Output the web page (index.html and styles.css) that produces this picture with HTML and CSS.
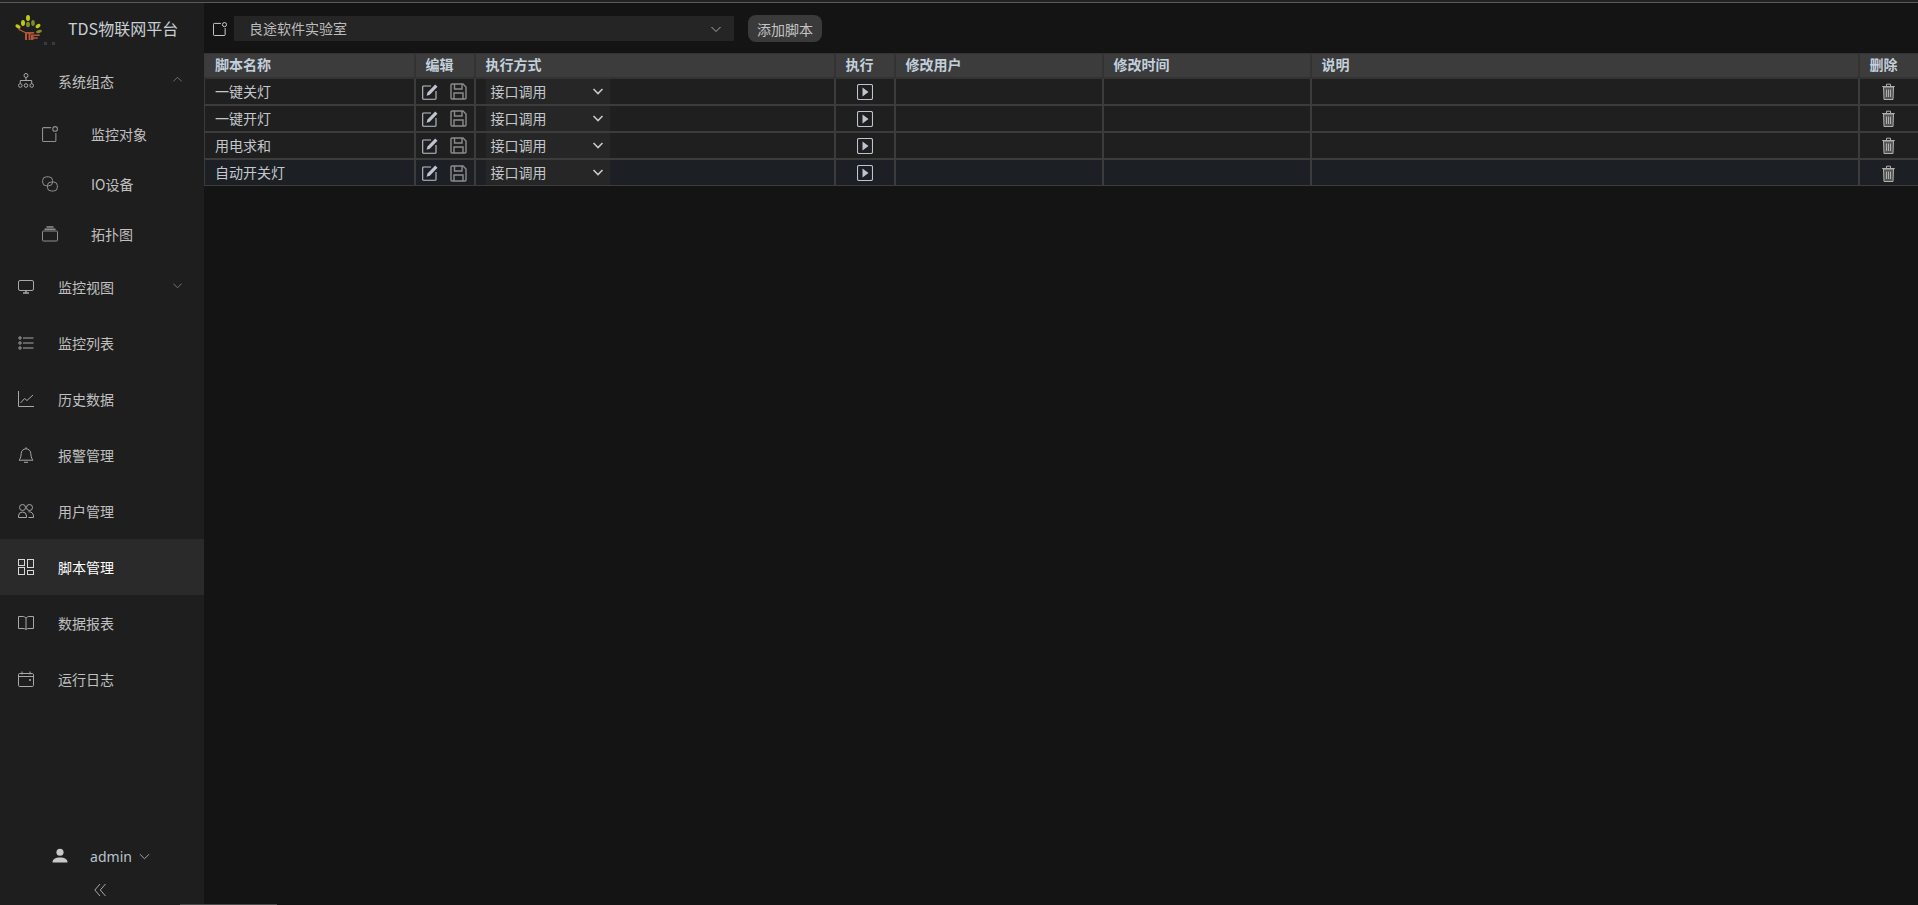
FILE: index.html
```html
<!DOCTYPE html>
<html lang="zh-CN">
<head>
<meta charset="utf-8">
<title>TDS物联网平台</title>
<link rel="stylesheet" href="styles.css">
</head>
<body>
<svg class="defs" width="0" height="0">
  <symbol id="i-obj" viewBox="0 0 15 15"><path d="M8.500 1.500H1.500a1 1 0 0 0-1 1v11a1 1 0 0 0 1 1h10.500a1 1 0 0 0 1-1V6.500"/><circle cx="12.300" cy="2.800" r="2.200"/></symbol>
  <symbol id="i-edit" viewBox="0 0 16 16"><path d="M9 2H1.500a.8.800 0 0 0-.8.800v11.700a.8.800 0 0 0 .8.800h11.700a.8.800 0 0 0 .8-.8V7"/><path class="fill" d="M13.200.5 15.500 2.800 7.800 10.700 4.600 11.700 5.500 8.400Z"/></symbol>
  <symbol id="i-save" viewBox="0 0 17 17"><path d="M1 2a1 1 0 0 1 1-1h11l3 3v11a1 1 0 0 1-1 1H2a1 1 0 0 1-1-1Z"/><path d="M4.500 1v5h7.500V1M4 16v-6h9v6"/></symbol>
  <symbol id="i-play" viewBox="0 0 16 16"><rect x=".5" y=".5" width="15" height="15" rx="1.500"/><path class="fill" d="M5.500 3.500 11.500 8l-6 4.500Z"/></symbol>
  <symbol id="i-trash" viewBox="0 0 13 17"><path class="body" d="M1.500 4h10l-.5 12.500H2Z"/><path d="M.2 3.500h12.600M4.500 3V1.200h4V3M4.500 6.500v7.500M6.500 6.500v7.500M8.500 6.500v7.500"/></symbol>
  <symbol id="i-down" viewBox="0 0 12 12"><path d="M1.500 4 6 8.500 10.500 4"/></symbol>
</svg>

<div class="app">
  <aside class="sidebar">
    <div class="brand">
      <svg class="logo" viewBox="0 0 32 32" width="32" height="32">
        <path class="trunk" d="M5.500 16.500 12.500 20h9l-1 1.800h-3V28h-2v-6.200h-1.500V28h-2v-7l-6.500-3ZM18 22.500h9l-.5 1.500h-6v1.300h4.500l-.5 1.500h-4V28H18Z"/>
        <ellipse class="leaf-y" cx="15" cy="6" rx="2" ry="3"/>
        <ellipse class="leaf-y" cx="10" cy="11" rx="2" ry="3"/>
        <ellipse class="leaf-g" cx="15" cy="12.500" rx="2" ry="2.800"/>
        <ellipse class="leaf-g" cx="20" cy="11" rx="1.800" ry="3"/>
        <ellipse class="leaf-y" cx="5" cy="14.500" rx="2.800" ry="1.800" transform="rotate(30 5 14.500)"/>
        <ellipse class="leaf-y" cx="25" cy="14" rx="2.800" ry="1.800" transform="rotate(-35 25 14)"/>
        <ellipse class="leaf-g" cx="26" cy="19.500" rx="3" ry="1.600" transform="rotate(-15 26 19.500)"/>
      </svg>
      <span class="brand-dots"></span>
      <span class="brand-name">TDS物联网平台</span>
    </div>
    <nav class="menu">
      <div class="item">
        <svg class="ico" viewBox="0 0 16 16"><circle cx="8" cy="2.500" r="2"/><path d="M8 4.500v3M2.300 10.500v-3h11.400v3"/><circle cx="2.300" cy="12.500" r="1.800"/><circle cx="8" cy="12.500" r="1.800"/><circle cx="13.700" cy="12.500" r="1.800"/></svg>
        <span>系统组态</span>
        <svg class="arrow" viewBox="0 0 12 12"><path d="M1.500 8 6 3.500 10.500 8"/></svg>
      </div>
      <div class="sub"><svg class="ico"><use href="#i-obj"/></svg><span>监控对象</span></div>
      <div class="sub"><svg class="ico" viewBox="0 0 16 16"><rect x=".6" y=".8" width="10" height="9" rx="3.800"/><rect x="5.400" y="6" width="10" height="9" rx="3.800"/></svg><span>IO设备</span></div>
      <div class="sub"><svg class="ico" viewBox="0 0 16 16"><rect x=".5" y="5" width="15" height="10" rx=".8"/><path class="wide" d="M2.500 3.300h11M4.500 1h7"/></svg><span>拓扑图</span></div>
      <div class="item">
        <svg class="ico" viewBox="0 0 16 16"><rect x=".5" y="1.500" width="15" height="10" rx="1.500"/><path class="wide" d="M8 11.500v2M5 14h6"/></svg>
        <span>监控视图</span>
        <svg class="arrow" viewBox="0 0 12 12"><path d="M1.500 4 6 8.500 10.500 4"/></svg>
      </div>
      <div class="item"><svg class="ico" viewBox="0 0 16 16"><path d="M5 3h10.500M5 8h10.500M5 13h10.500"/><circle cx="2" cy="3" r="1.200"/><circle cx="2" cy="8" r="1.200"/><circle cx="2" cy="13" r="1.200"/></svg><span>监控列表</span></div>
      <div class="item"><svg class="ico" viewBox="0 0 16 16"><path d="M.5 0v15.500H16M2.500 12l4-4.500 2.500 2L15 4"/></svg><span>历史数据</span></div>
      <div class="item"><svg class="ico" viewBox="0 0 16 16"><path d="M8 1.800a4.800 4.800 0 0 0-4.800 4.800c0 4-1.700 5.900-2.200 6.600h14c-.5-.7-2.200-2.600-2.200-6.600A4.800 4.800 0 0 0 8 1.800ZM8 .3v1.500M6 15.300h4"/></svg><span>报警管理</span></div>
      <div class="item"><svg class="ico" viewBox="0 0 16 16"><circle cx="4.500" cy="4.500" r="3"/><circle cx="11.500" cy="4.500" r="3"/><path d="M.5 14.500V13a4 4 0 0 1 4-4 4 4 0 0 1 4 4v1.500ZM10.500 8.800a4.800 4.800 0 0 1 5 4.200v1.500H10.500"/></svg><span>用户管理</span></div>
      <div class="item active"><svg class="ico" viewBox="0 0 16 16"><rect x=".5" y=".5" width="6" height="6"/><rect x="9.500" y=".5" width="6" height="8"/><rect x=".5" y="8.500" width="6" height="7"/><rect x="9.500" y="11.500" width="6" height="4"/></svg><span>脚本管理</span></div>
      <div class="item"><svg class="ico" viewBox="0 0 16 16"><path d="M8 3v11.500M8 3c-1-1-2-1.500-3-1.500H.5v12H5c1 0 2 .2 3 .8 1-.6 2-.8 3-.8h4.500v-12H11c-1 0-2 .5-3 1.500Z"/></svg><span>数据报表</span></div>
      <div class="item"><svg class="ico" viewBox="0 0 16 16"><rect x=".5" y="2.500" width="15" height="13" rx="1.200"/><path d="M.5 5.500h15M4 .5v3M12 .5v3"/><circle class="fill" cx="12" cy="9" r="1"/></svg><span>运行日志</span></div>
    </nav>
    <div class="side-foot">
      <div class="user">
        <svg class="user-ico" viewBox="0 0 16 16"><circle cx="8" cy="4.500" r="3.800"/><path d="M0 15.500c0-4 3-5.500 8-5.500s8 1.500 8 5.500Z"/></svg>
        <span>admin</span>
        <svg class="user-arrow" viewBox="0 0 12 12"><path d="M1 3.500 6 8.500 11 3.500"/></svg>
      </div>
      <svg class="collapse" viewBox="0 0 12 14"><path d="M6 1 .8 7 6 13M11.500 1 6.300 7l5.200 6"/></svg>
    </div>
  </aside>

  <main class="main">
    <div class="toolbar">
      <svg class="tool-ico"><use href="#i-obj"/></svg>
      <div class="picker"><span>良途软件实验室</span><svg class="picker-arrow"><use href="#i-down"/></svg></div>
      <button class="btn">添加脚本</button>
    </div>
    <table class="grid">
      <colgroup>
        <col class="c-name"><col class="c-edit"><col class="c-mode"><col class="c-run"><col class="c-user"><col class="c-time"><col class="c-desc"><col class="c-del">
      </colgroup>
      <thead>
        <tr><th>脚本名称</th><th>编辑</th><th>执行方式</th><th>执行</th><th>修改用户</th><th>修改时间</th><th>说明</th><th>删除</th></tr>
      </thead>
      <tbody>
        <tr>
          <td>一键关灯</td>
          <td class="mid"><svg class="act"><use href="#i-edit"/></svg><svg class="act save"><use href="#i-save"/></svg></td>
          <td class="mode"><div class="sel"><span>接口调用</span><svg class="sel-arrow"><use href="#i-down"/></svg></div></td>
          <td class="mid"><svg class="act"><use href="#i-play"/></svg></td>
          <td></td><td></td><td></td>
          <td class="mid"><svg class="bin"><use href="#i-trash"/></svg></td>
        </tr>
        <tr>
          <td>一键开灯</td>
          <td class="mid"><svg class="act"><use href="#i-edit"/></svg><svg class="act save"><use href="#i-save"/></svg></td>
          <td class="mode"><div class="sel"><span>接口调用</span><svg class="sel-arrow"><use href="#i-down"/></svg></div></td>
          <td class="mid"><svg class="act"><use href="#i-play"/></svg></td>
          <td></td><td></td><td></td>
          <td class="mid"><svg class="bin"><use href="#i-trash"/></svg></td>
        </tr>
        <tr>
          <td>用电求和</td>
          <td class="mid"><svg class="act"><use href="#i-edit"/></svg><svg class="act save"><use href="#i-save"/></svg></td>
          <td class="mode"><div class="sel"><span>接口调用</span><svg class="sel-arrow"><use href="#i-down"/></svg></div></td>
          <td class="mid"><svg class="act"><use href="#i-play"/></svg></td>
          <td></td><td></td><td></td>
          <td class="mid"><svg class="bin"><use href="#i-trash"/></svg></td>
        </tr>
        <tr class="hover">
          <td>自动开关灯</td>
          <td class="mid"><svg class="act"><use href="#i-edit"/></svg><svg class="act save"><use href="#i-save"/></svg></td>
          <td class="mode"><div class="sel"><span>接口调用</span><svg class="sel-arrow"><use href="#i-down"/></svg></div></td>
          <td class="mid"><svg class="act"><use href="#i-play"/></svg></td>
          <td></td><td></td><td></td>
          <td class="mid"><svg class="bin"><use href="#i-trash"/></svg></td>
        </tr>
      </tbody>
    </table>
  </main>
</div>
<div class="hscroll"></div>
</body>
</html>
```
FILE: styles.css
```css
* { box-sizing: border-box; }
html, body { margin: 0; height: 100%; overflow: hidden; }
body {
  background: #141414;
  color: #d0d0d0;
  font-family: "Noto Sans CJK SC", "Liberation Sans", sans-serif;
  font-size: 14px;
  position: relative;
}
body::before {
  content: "";
  display: block;
  height: 2px;
  background: #222;
}
.defs { position: absolute; }
svg { fill: none; stroke: currentColor; stroke-width: 1; display: block; flex: none; }
svg .fill { fill: currentColor; stroke: none; }

.app {
  height: calc(100% - 2px);
  display: flex;
  border-top: 1px solid #5a5a5a;
}

.sidebar {
  width: 204px;
  flex: none;
  background: #1e1e1e;
  display: flex;
  flex-direction: column;
}
.brand {
  height: 50px;
  display: flex;
  align-items: center;
  padding-left: 13px;
  position: relative;
}
.logo { stroke: none; }
.trunk { fill: #b5563a; }
.leaf-y { fill: #c2c914; }
.leaf-g { fill: #7f8c2c; }
.brand-dots {
  position: absolute;
  left: 44px;
  top: 39px;
  width: 3px;
  height: 3px;
  background: #3a3a3a;
  box-shadow: 8px 0 0 #3a3a3a;
}
.brand-name {
  margin-left: 23px;
  font-size: 16px;
  color: #c8d0d4;
  white-space: nowrap;
}
.menu { flex: 1; }
.item, .sub {
  display: flex;
  align-items: center;
  color: #c0c0c0;
}
.item { height: 56px; padding-left: 18px; gap: 24px; position: relative; }
.sub { height: 50px; padding-left: 42px; gap: 33px; }
.ico { width: 16px; height: 16px; color: #a8a8a8; }
.ico .wide { stroke-width: 1.500; }
.sub .ico { color: #8f8f8f; }
.arrow {
  position: absolute;
  right: 21px;
  top: 21px;
  width: 11px;
  height: 11px;
  color: #7a7a7a;
}
.item.active { background: #2a2a2a; color: #fff; }
.item.active .ico { color: #d8d8d8; }

.side-foot {
  height: 67px;
  display: flex;
  flex-direction: column;
  align-items: center;
}
.user {
  display: flex;
  align-items: center;
  height: 36px;
  color: #b8c4cc;
  font-family: "Noto Sans", "Noto Sans CJK SC", sans-serif;
  margin-left: -2px;
}
.user-ico { width: 16px; height: 15px; fill: #c8c8c8; stroke: none; margin-right: 22px; margin-top: -2px; }
.user-arrow { width: 11px; height: 11px; margin-left: 7px; color: #a8b4bc; }
.collapse { width: 12px; height: 14px; color: #a8a8a8; margin-top: 9px; margin-left: -4px; }

.main { flex: 1; min-width: 0; }
.toolbar {
  height: 50px;
  padding-top: 1px;
  display: flex;
  align-items: center;
  padding-left: 9px;
}
.tool-ico { width: 14px; height: 14px; color: #d8d8d8; }
.picker {
  width: 500px;
  height: 25px;
  margin-left: 7px;
  background: #252525;
  display: flex;
  align-items: center;
  justify-content: space-between;
  padding: 0 12px 0 15px;
  font-size: 14px;
  color: #bcbcbc;
  line-height: 25px;
}
.picker-arrow { width: 12px; height: 12px; color: #aaa; }
.btn {
  margin-left: 14px;
  width: 74px;
  height: 27px;
  border: 0;
  border-radius: 8px;
  background: #3a3a3a;
  color: #c4c4c4;
  font: inherit;
  font-size: 14px;
  padding: 0;
}

.grid {
  width: 1714px;
  table-layout: fixed;
  border-collapse: collapse;
  border-left: 1px solid #3a3a3a;
}
.c-name { width: 210px; }
.c-edit { width: 60px; }
.c-mode { width: 360px; }
.c-run { width: 60px; }
.c-user { width: 208px; }
.c-time { width: 208px; }
.c-desc { width: 548px; }
.c-del { width: 60px; }
th, td {
  border: 2px solid #3c3c3c;
  padding: 0 0 0 10px;
  height: 27px;
  text-align: left;
  white-space: nowrap;
  line-height: 20px;
  font-size: 14px;
}
tr > :first-child { border-left: 0; }
tr > :last-child { border-right: 0; }
th {
  height: 24px;
  padding-bottom: 2px;
  background: #3c3c3c;
  color: #c2d0dc;
  font-weight: 700;
  border-color: #333;
  border-top: 1px solid #333;
}
td { background: #1f1f1f; color: #c4c8cc; }
tr.hover td { background: #1c2024; }
tbody tr:last-child td { border-bottom: 1px solid #3c3c3c; }
td.mid { padding: 0 0 2px; text-align: center; }
td.mid svg { display: inline-block; vertical-align: middle; }
.act { width: 16px; height: 16px; color: #c0c4d0; stroke-width: 1.100; }
.act.save { margin-left: 12px; color: #8c8c8c; width: 17px; height: 17px; stroke-width: 1.400; }
.bin { width: 13px; height: 17px; color: #b0b0b0; margin-right: 1px; }
svg .body { fill: #555; stroke: #b0b0b0; }
td.mode { padding: 0 0 0 10px; }
.sel {
  width: 124px;
  height: 25px;
  background: #262626;
  display: flex;
  align-items: center;
  justify-content: space-between;
  padding: 0 6px 0 5px;
  color: #c4c8cc;
}
.sel-arrow { width: 12px; height: 12px; stroke-width: 1.600; color: #c8c8c8; }

.hscroll {
  position: absolute;
  left: 180px;
  bottom: 0;
  width: 97px;
  height: 1px;
  background: #4a4a4a;
}
```
